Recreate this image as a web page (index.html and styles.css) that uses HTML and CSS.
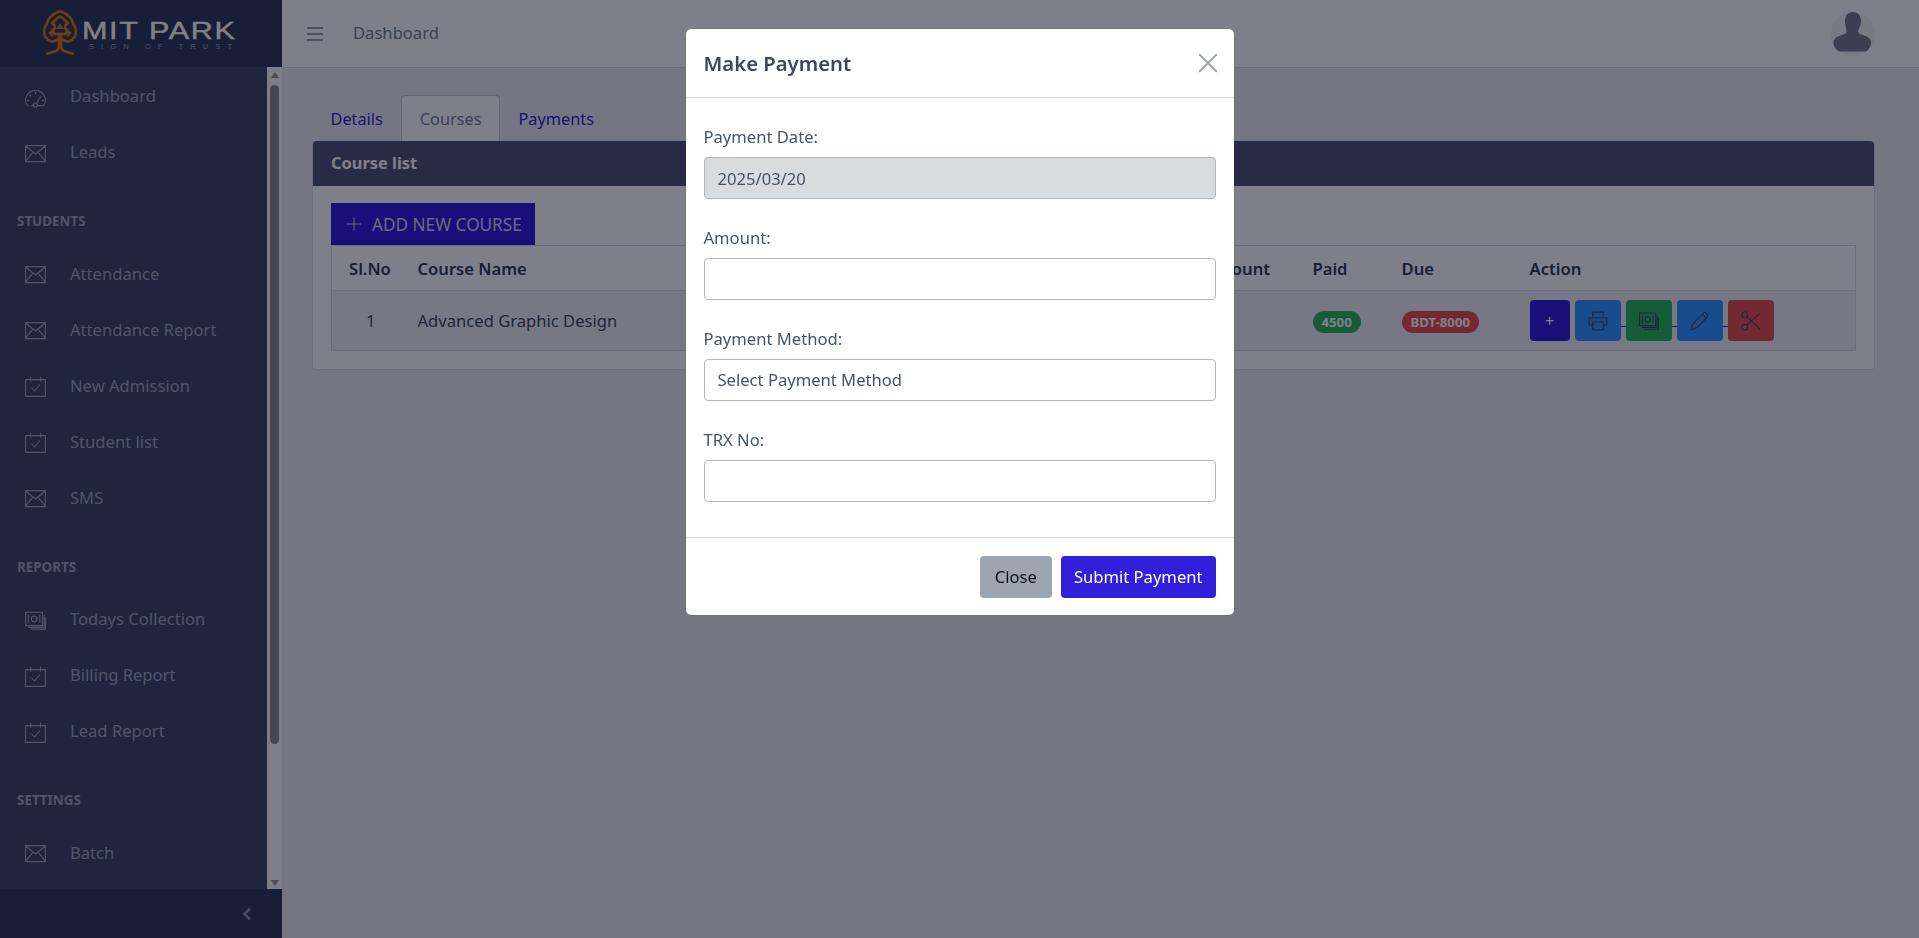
FILE: index.html
```html
<!DOCTYPE html>
<html lang="en">
<head>
  <meta charset="UTF-8"/>
  <title>MIT Park – Dashboard</title>
  <link rel="stylesheet" href="styles.css">
</head>
<body>
  <svg class="defs" width="0" height="0">
    <symbol id="i-envelope" viewBox="0 0 21 21"><path d="M.6 2.600h19.800v16H.6zM.6 3l9.900 8 9.900-8M.6 18.200l7-8.600M20.400 18.200l-7-8.600"/></symbol>
    <symbol id="i-calendar" viewBox="0 0 21 21"><path d="M.6 3.600h19.800v16.800H.6zM5.500 .8v5M15.500 .8v5M6.500 11.500l3 3.500 5.500-6.500"/></symbol>
    <symbol id="i-gauge" viewBox="0 0 21 21"><path d="M3 18.600H2.200A9.900 9.900 0 1 1 18.800 18.600H13M8 18.600H6M10.500 5v2M4.500 8l1.400 1.400M2 13.500h2M17 13.500h2M11.500 16.600l4-7"/><circle cx="10.500" cy="18" r="2"/></symbol>
    <symbol id="i-money" viewBox="0 0 21 21"><path d="M.6 2.200h17v13.400H.6zM19.200 5v12.400H3M20.600 7.500v11.600H5.500M3.400 5v7.800M14.800 5v7.800"/><circle cx="9.100" cy="8.900" r="2.800"/></symbol>
    <symbol id="i-print" viewBox="0 0 21 21"><path d="M5 7V1.200h11V7M5 15H1.200V7h18.600v8H16M5 11.500h11v8.300H5zM3.500 9.300h1.500"/></symbol>
    <symbol id="i-pencil" viewBox="0 0 21 21"><path d="M1.200 19.800c.3-3 1.200-5.500 2.500-7L14.500 2c1.500-1.500 5.500 2 4 4L8 16.800c-1.800 1.500-4 2.500-6.800 3zM13 3.500l4.500 4"/></symbol>
    <symbol id="i-cut" viewBox="0 0 21 21"><circle cx="4" cy="4" r="3"/><circle cx="4" cy="17" r="3"/><path d="M6 6l14 13M6 15L20 2"/></symbol>
  </svg>

  <aside class="sidebar">
    <div class="brand">
      <svg class="brand-tree" viewBox="0 0 34 46">
        <path d="M17 2C10 5 5 9 4 14c-1 2-3 5-3 9 0 4 3 8 6 9 3 1 6 0 8-2M17 2c7 3 12 7 13 12 1 2 3 5 3 9 0 4-3 8-6 9-3 1-6 0-8-2"/>
        <path d="M17 7l-8 7c2 1 3 3 3 5l-5 5 3 3M17 7l8 7c-2 1-3 3-3 5l5 5-3 3M9 21l3 4h10l3-4"/>
        <path class="solid" d="M17 14l4 6h-8z"/>
        <path d="M16 26v11c0 2-1 4-3 5l-10 3M18 26v11c0 2 1 4 3 5l10 3"/>
      </svg>
      <div class="brand-text">
        <span class="brand-name">MIT PARK</span>
        <span class="brand-sub">SIGN OF TRUST</span>
      </div>
    </div>
    <div class="side-mid">
      <nav class="side-nav">
        <a class="side-link"><svg class="side-icon"><use href="#i-gauge"/></svg>Dashboard</a>
        <a class="side-link"><svg class="side-icon"><use href="#i-envelope"/></svg>Leads</a>
        <div class="side-title">STUDENTS</div>
        <a class="side-link"><svg class="side-icon"><use href="#i-envelope"/></svg>Attendance</a>
        <a class="side-link"><svg class="side-icon"><use href="#i-envelope"/></svg>Attendance Report</a>
        <a class="side-link"><svg class="side-icon"><use href="#i-calendar"/></svg>New Admission</a>
        <a class="side-link"><svg class="side-icon"><use href="#i-calendar"/></svg>Student list</a>
        <a class="side-link"><svg class="side-icon"><use href="#i-envelope"/></svg>SMS</a>
        <div class="side-title">REPORTS</div>
        <a class="side-link"><svg class="side-icon"><use href="#i-money"/></svg>Todays Collection</a>
        <a class="side-link"><svg class="side-icon"><use href="#i-calendar"/></svg>Billing Report</a>
        <a class="side-link"><svg class="side-icon"><use href="#i-calendar"/></svg>Lead Report</a>
        <div class="side-title">SETTINGS</div>
        <a class="side-link"><svg class="side-icon"><use href="#i-envelope"/></svg>Batch</a>
      </nav>
      <div class="side-scroll">
        <span class="arrow-up"></span>
        <span class="scroll-thumb"></span>
        <span class="arrow-down"></span>
      </div>
    </div>
    <div class="side-foot">
      <svg class="foot-chevron" viewBox="0 0 10 14"><path d="M8 1.500L2.500 7 8 12.500"/></svg>
    </div>
  </aside>

  <div class="main">
    <header class="topbar">
      <svg class="burger" viewBox="0 0 16 14"><path d="M0 1h16M0 7h16M0 13h16"/></svg>
      <span class="crumb">Dashboard</span>
      <svg class="avatar" viewBox="0 0 44 44">
        <circle class="avatar-bg" cx="22" cy="22" r="22"/>
        <path class="avatar-man" d="M22 0c5 0 8 3.500 8 9 0 4-1.500 7-3 9.500 0 2 .5 3 3 4 5 1.500 9.500 3 10 7.500.2 3-1 7-5 9.500H9c-5-2-7-6-6.500-9.500.5-4.500 5-6 10-7.500 2.500-1 3-2 3-4C15 16 14 13 14 9c0-5.500 3-9 8-9z"/>
      </svg>
    </header>

    <div class="content">
      <ul class="tabs">
        <li class="tab">Details</li>
        <li class="tab tab-active">Courses</li>
        <li class="tab">Payments</li>
      </ul>
      <section class="card">
        <div class="card-head">Course list</div>
        <div class="card-body">
          <a class="add-btn"><svg class="add-plus" viewBox="0 0 14 14"><path d="M7 0v14M0 7h14"/></svg>ADD NEW COURSE</a>
          <table class="course-table">
            <colgroup>
              <col class="col-sl"><col class="col-name"><col class="col-fee"><col class="col-disc"><col class="col-paid"><col class="col-due"><col>
            </colgroup>
            <thead>
              <tr><th>Sl.No</th><th>Course Name</th><th></th><th>Discount</th><th>Paid</th><th>Due</th><th>Action</th></tr>
            </thead>
            <tbody>
              <tr>
                <td class="cell-center">1</td>
                <td>Advanced Graphic Design</td>
                <td></td>
                <td></td>
                <td><span class="badge badge-green">4500</span></td>
                <td><span class="badge badge-red">BDT-8000</span></td>
                <td>
                  <div class="actions">
                    <a class="act act-plus">+</a>
                    <a class="act act-blue"><svg class="act-icon"><use href="#i-print"/></svg></a>
                    <i class="act-gap"></i>
                    <a class="act act-green"><svg class="act-icon"><use href="#i-money"/></svg></a>
                    <i class="act-gap"></i>
                    <a class="act act-blue"><svg class="act-icon"><use href="#i-pencil"/></svg></a>
                    <i class="act-gap"></i>
                    <a class="act act-red"><svg class="act-icon"><use href="#i-cut"/></svg></a>
                  </div>
                </td>
              </tr>
            </tbody>
          </table>
        </div>
      </section>
    </div>
  </div>

  <div class="backdrop"></div>
  <div class="modal-wrap">
    <div class="modal">
      <div class="modal-head">
        <h5 class="modal-title">Make Payment</h5>
        <svg class="modal-x" viewBox="0 0 18 18"><path d="M1 1l16 16M17 1L1 17"/></svg>
      </div>
      <form class="modal-body">
        <div class="form-group">
          <label>Payment Date:</label>
          <input class="field" value="2025/03/20" disabled>
        </div>
        <div class="form-group">
          <label>Amount:</label>
          <input class="field">
        </div>
        <div class="form-group">
          <label>Payment Method:</label>
          <div class="field field-select">Select Payment Method</div>
        </div>
        <div class="form-group">
          <label>TRX No:</label>
          <input class="field">
        </div>
      </form>
      <div class="modal-foot">
        <button class="btn btn-close">Close</button>
        <button class="btn btn-submit">Submit Payment</button>
      </div>
    </div>
  </div>
</body>
</html>
```
FILE: styles.css
```css
*, *::before, *::after { box-sizing: border-box; margin:0; padding:0 }
html, body { height:100%; overflow:hidden }
body {
  font-family:"Noto Sans",sans-serif;
  font-size:16.6px;
  background:#ebedef;
  color:#4f5d73;
  display:flex;
}
.defs { position:absolute }

/* sidebar */
.sidebar {
  width:282px; flex:none;
  display:flex; flex-direction:column;
  background:#3c4b64;
}
.brand {
  height:67px; flex:none;
  background:#303c54;
  display:flex; align-items:center;
  padding:6px 0 0 42px;
}
.brand-tree {
  width:36px; height:46px;
  margin-top:-10px;
  fill:none; stroke:#d9791a; stroke-width:2.600;
}
.brand-tree .solid { fill:#d9791a; stroke:none }
.brand-text {
  display:flex; flex-direction:column;
  margin-left:4px;
  color:#fff;
}
.brand-name {
  font-family:"Liberation Sans",sans-serif;
  font-size:23px; line-height:21px;
  letter-spacing:1.200px;
  white-space:nowrap;
  transform:scaleX(1.33); transform-origin:left;
  -webkit-text-stroke:.4px #fff;
}
.brand-sub {
  font-family:"Liberation Sans",sans-serif;
  font-size:7.500px; line-height:10px;
  letter-spacing:7.100px;
  margin-left:7px;
  color:#a0a4ae;
  white-space:nowrap;
}
.side-mid { flex:1; display:flex; min-height:0 }
.side-nav { flex:1; overflow:hidden }
.side-link {
  height:56px;
  display:flex; align-items:center;
  padding:1px 0 0 25px;
  color:#a1a9bc;
}
.side-icon {
  width:21px; height:21px;
  margin:3px 24px 0 0;
  fill:none; stroke:currentColor; stroke-width:1.100;
}
.side-title {
  height:65.500px;
  padding:30px 0 0 17px;
  font-size:13.400px; line-height:24px;
  font-weight:700;
  color:#a1a9bc;
}
.side-scroll {
  width:15px; flex:none;
  display:flex; flex-direction:column; align-items:center;
  background:#fafafa;
  padding:5px 0 3px;
}
.arrow-up, .arrow-down { width:0; height:0; border-left:4.500px solid transparent; border-right:4.500px solid transparent }
.arrow-up { border-bottom:6px solid #9c9c9c }
.arrow-down { border-top:6px solid #9c9c9c; margin-top:auto }
.scroll-thumb {
  width:9px; height:659px;
  margin-top:7px;
  background:#8f8f8f;
  border-radius:5px;
}
.side-foot {
  height:49px; flex:none;
  background:#303c54;
  display:flex; align-items:center; justify-content:flex-end;
  padding-right:30px;
}
.foot-chevron { width:10px; height:14px; fill:none; stroke:#8a93a6; stroke-width:2.800 }

/* top bar and page */
.main { flex:1; min-width:0; display:flex; flex-direction:column }
.topbar {
  height:68px; flex:none;
  background:#fff;
  border-bottom:1px solid #d8dbe0;
  display:flex; align-items:center;
  padding:0 44px 0 25px;
}
.burger { width:16px; height:14px; fill:none; stroke:#768192; stroke-width:1.300 }
.crumb { margin:-2px 0 0 30px; color:#768192 }
.avatar { width:44px; height:44px; margin-left:auto }
.avatar-bg { fill:#f2f2f3 }
.avatar-man { fill:#7c7c8a }
.content { padding:27px 44px 0 30px }
.tabs {
  list-style:none;
  display:flex;
  height:46px;
  font-size:16.300px;
}
.tab {
  padding:0 17.500px;
  line-height:46px;
  color:#321fdb;
  border:1px solid transparent;
}
.tab-active {
  color:#768192;
  background:#fff;
  border-color:#c4c9d0 #c4c9d0 #fff;
  border-radius:4px 4px 0 0;
}
.card {
  background:#fff;
  border:1px solid #d8dbe0;
  border-top:none;
  border-radius:4px;
}
.card-head {
  height:45px;
  background:#4f5873;
  color:#fff;
  font-weight:700;
  font-size:16.400px;
  line-height:43px;
  padding-left:18px;
  border-radius:4px 4px 0 0;
}
.card-body { padding:17px 18px 18px }
.add-btn {
  display:inline-flex; align-items:center;
  height:42px;
  padding:0 13px 0 16px;
  background:#321fdb;
  color:#d6d4f0;
  font-size:17.200px;
  vertical-align:top;
}
.add-plus { width:14px; height:14px; margin-right:11px; fill:none; stroke:currentColor; stroke-width:1 }
.course-table {
  width:100%;
  table-layout:fixed;
  border-collapse:collapse;
  border:1px solid #d8dbe0;
}
.col-sl { width:69px }
.col-name { width:400px }
.col-fee { width:381px }
.col-disc { width:114px }
.col-paid { width:89px }
.col-due { width:128px }
.course-table th {
  height:45px;
  text-align:left;
  padding:0 17px;
  font-weight:600;
  color:#343c50;
  white-space:nowrap;
}
.course-table td {
  height:60px;
  padding:0 17px;
  background:#f1f1f3;
  border-top:1px solid #d8dbe0;
  color:#434b5e;
  white-space:nowrap;
}
.course-table .cell-center { text-align:center; padding-left:26px }
.badge {
  display:inline-block;
  height:22px;
  padding:0 9px;
  border-radius:11px;
  color:#fff;
  font-size:13.200px; font-weight:700;
  line-height:22px;
  vertical-align:middle;
}
.badge-green { background:#2eb85c }
.badge-red { background:#e55353 }
.actions { display:flex; align-items:flex-start }
.act {
  width:46px; height:41px;
  border-radius:4px;
  display:flex; align-items:center; justify-content:center;
  color:#3c4b64;
}
.act-plus { width:40px; margin-right:5px; background:#321fdb; color:#fff; font-size:16px }
.act-blue { background:#39f }
.act-green { background:#2eb85c }
.act-red { background:#e55353 }
.act-icon { width:20px; height:20px; fill:none; stroke:currentColor; stroke-width:1.100 }
.act-gap { width:5px; height:1px; margin-top:26px; background:#321fdb }

/* modal */
.backdrop { position:fixed; inset:0; background:#000015; opacity:.5 }
.modal-wrap {
  position:fixed; inset:0;
  display:flex; justify-content:center; align-items:flex-start;
  padding-top:29px;
}
.modal {
  width:548px;
  background:#fff;
  border-radius:5px;
  box-shadow:0 0 1px rgba(0,0,21,.5);
}
.modal-head {
  height:69px;
  display:flex; align-items:center; justify-content:space-between;
  padding:0 16px 0 18px;
  border-bottom:1px solid #d8dbe0;
}
.modal-title { font-size:20.300px; font-weight:600; color:#3c4858 }
.modal-x { width:20px; height:20px; fill:none; stroke:#9a9fa8; stroke-width:1.800 }
.modal-body { padding:27px 18px 8px }
.form-group { margin-bottom:27px }
.form-group label { display:block; line-height:24px; margin-bottom:8px; color:#475468 }
.field {
  display:block;
  width:100%; height:42px;
  padding:0 13px;
  border:1px solid #b1b7c1;
  border-radius:4px;
  background:#fff;
  color:#475468;
  font:inherit;
}
.field[disabled] { background:#d8dbe0 }
.field-select { line-height:40px }
.modal-foot {
  height:78px;
  display:flex; align-items:flex-start; justify-content:flex-end;
  gap:9px;
  padding:18px 18px 0;
  border-top:1px solid #d8dbe0;
}
.btn {
  height:42px;
  padding:0 13px 2px;
  border:none;
  border-radius:4px;
  font:inherit;
}
.btn-close { padding:0 15px 2px; background:#9da5b1; color:#0b0b20 }
.btn-submit { background:#321fdb; color:#fff }
```
